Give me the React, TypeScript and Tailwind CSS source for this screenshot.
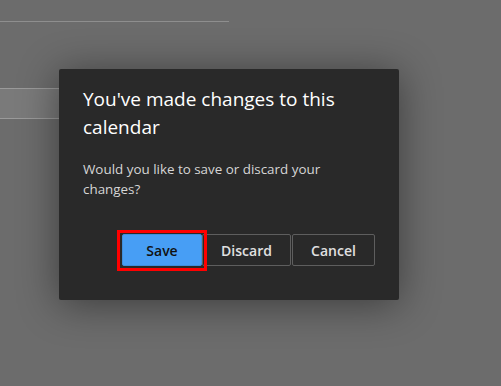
import React from "react";

export default function App() {
  return (
    <div
      className="relative h-[386px] w-[501px] overflow-hidden bg-[#6c6c6c]"
      style={{ fontFamily: '"Open Sans", "Noto Sans", sans-serif' }}
    >
      {/* background page (dimmed) */}
      <div className="pt-[21px]">
        <div className="h-px w-[229px] bg-[#8e8e8e]" />
        <div className="mt-[66px] h-[31px] w-[70px] border-y border-[#9a9a9a] bg-[#7a7a7a]" />
      </div>

      {/* dialog */}
      <div className="absolute left-[59px] top-[69px] flex h-[231px] w-[340px] flex-col rounded-[2px] bg-[#292929] px-[24px] pt-[16px] shadow-[0_4px_40px_rgba(0,0,0,0.45)]">
        <h2 className="w-[270px] text-[19px] leading-[28px] font-normal text-white">
          You've made changes to this calendar
        </h2>
        <p className="mt-[18px] w-[250px] text-[13.4px] leading-[20px] text-[#d6d6d6]">
          Would you like to save or discard your changes?
        </p>
        <div className="mt-[35px] flex justify-end">
          <div className="relative">
            <button className="flex h-[32px] w-[80px] items-center justify-center rounded-[2px] border border-[#3f8fdc] bg-[#479ef5] text-[14px] font-semibold text-[#111111]">
              Save
            </button>
            <div className="pointer-events-none absolute -left-[5px] -top-[4px] -right-[5px] -bottom-[5px] border-[3px] border-[#ff0000]" />
          </div>
          <button className="flex h-[32px] w-[89px] items-center justify-center rounded-[2px] border border-[#5e5e5e] bg-[#292929] text-[14px] font-semibold text-[#e0e0e0]">
            Discard
          </button>
          <button className="ml-px flex h-[32px] w-[83px] items-center justify-center rounded-[2px] border border-[#5e5e5e] bg-[#292929] text-[14px] font-semibold text-[#e0e0e0]">
            Cancel
          </button>
        </div>
      </div>
    </div>
  );
}
